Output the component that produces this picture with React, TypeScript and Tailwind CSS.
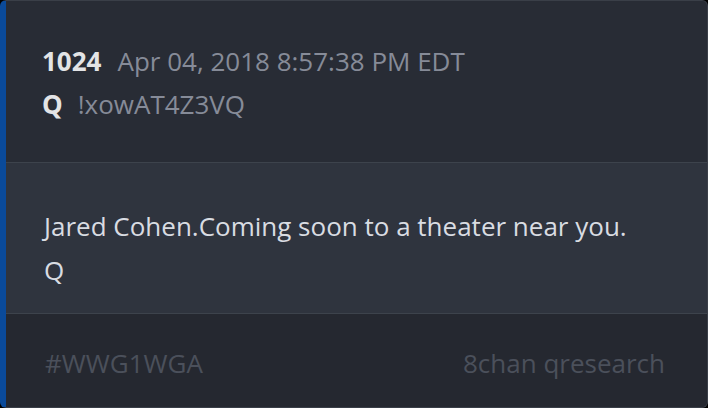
export default function App() {
  return (
    <div className="w-[708px] h-[408px] bg-black" style={{ fontFamily: '"Open Sans", sans-serif' }}>
      <div className="h-full flex flex-col overflow-hidden rounded-md border border-[#3a3f48] border-l-[6px] border-l-[#0a4a9a] bg-[#282c35]">

        {/* Header */}
        <div className="h-[161px] shrink-0 flex flex-col justify-center pl-[36px] pt-[2px] text-[26px] leading-[43px]">
          <div className="flex items-baseline gap-[16px]">
            <span className="font-bold text-[#e3e4e6]">1024</span>
            <span className="text-[#868b98]">Apr 04, 2018 8:57:38 PM EDT</span>
          </div>
          <div className="flex items-baseline gap-[15px]">
            <span className="font-bold text-[#e3e4e6]">Q</span>
            <span className="text-[#868b98]">!xowAT4Z3VQ</span>
          </div>
        </div>

        {/* Body */}
        <div className="h-[152px] shrink-0 border-y border-[#3d434c] bg-[#2f343e] pl-[38px] pt-[41px] text-[26px] leading-[44px] text-[#d9dce2]">
          <p>Jared Cohen.Coming soon to a theater near you.</p>
          <p>Q</p>
        </div>

        {/* Footer */}
        <div className="flex-1 flex items-center justify-between pl-[39px] pr-[42px] pt-[5px] bg-[#252830] text-[26px] text-[#4b505b]">
          <span>#WWG1WGA</span>
          <span>8chan qresearch</span>
        </div>

      </div>
    </div>
  )
}
